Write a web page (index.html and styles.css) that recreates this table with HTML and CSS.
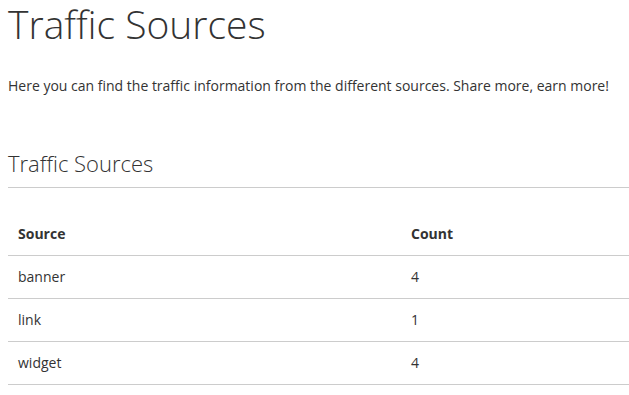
FILE: index.html
```html
<!DOCTYPE html>
<html>
<head>
<meta charset="utf-8">
<link rel="stylesheet" href="styles.css">
</head>
<body>
<div class="page">
  <h1 class="title">Traffic Sources</h1>
  <p class="intro">Here you can find the traffic information from the different sources. Share more, earn more!</p>
  <h2 class="section">Traffic Sources</h2>
  <table class="data">
    <thead>
      <tr><th class="col-source">Source</th><th class="col-count">Count</th></tr>
    </thead>
    <tbody>
      <tr><td>banner</td><td>4</td></tr>
      <tr><td>link</td><td>1</td></tr>
      <tr><td>widget</td><td>4</td></tr>
    </tbody>
  </table>
</div>
</body>
</html>
```

FILE: styles.css
```css
html, body {
  margin: 0;
  padding: 0;
  background: #fff;
}
body {
  font-family: "Open Sans", "Liberation Sans", sans-serif;
  color: #333;
  overflow-x: hidden;
}
.page {
  padding: 0 0 0 8px;
}
.title {
  font-weight: 300;
  font-size: 39px;
  line-height: 48px;
  margin: 0;
}
.intro {
  font-size: 14px;
  line-height: 20px;
  margin: 28px 0 0 0;
}
.section {
  font-weight: 300;
  font-size: 22px;
  line-height: 30px;
  margin: 52px 0 0 0;
  padding-bottom: 9px;
  border-bottom: 1px solid #ccc;
}
.data {
  width: 100%;
  border-collapse: collapse;
  margin-top: 25px;
  font-size: 14px;
}
.data th, .data td {
  text-align: left;
  padding: 10px 10px;
  line-height: 22px;
  border-bottom: 1px solid #ccc;
}
.data th {
  font-weight: 700;
}
.col-source {
  width: 373px;
}
```
